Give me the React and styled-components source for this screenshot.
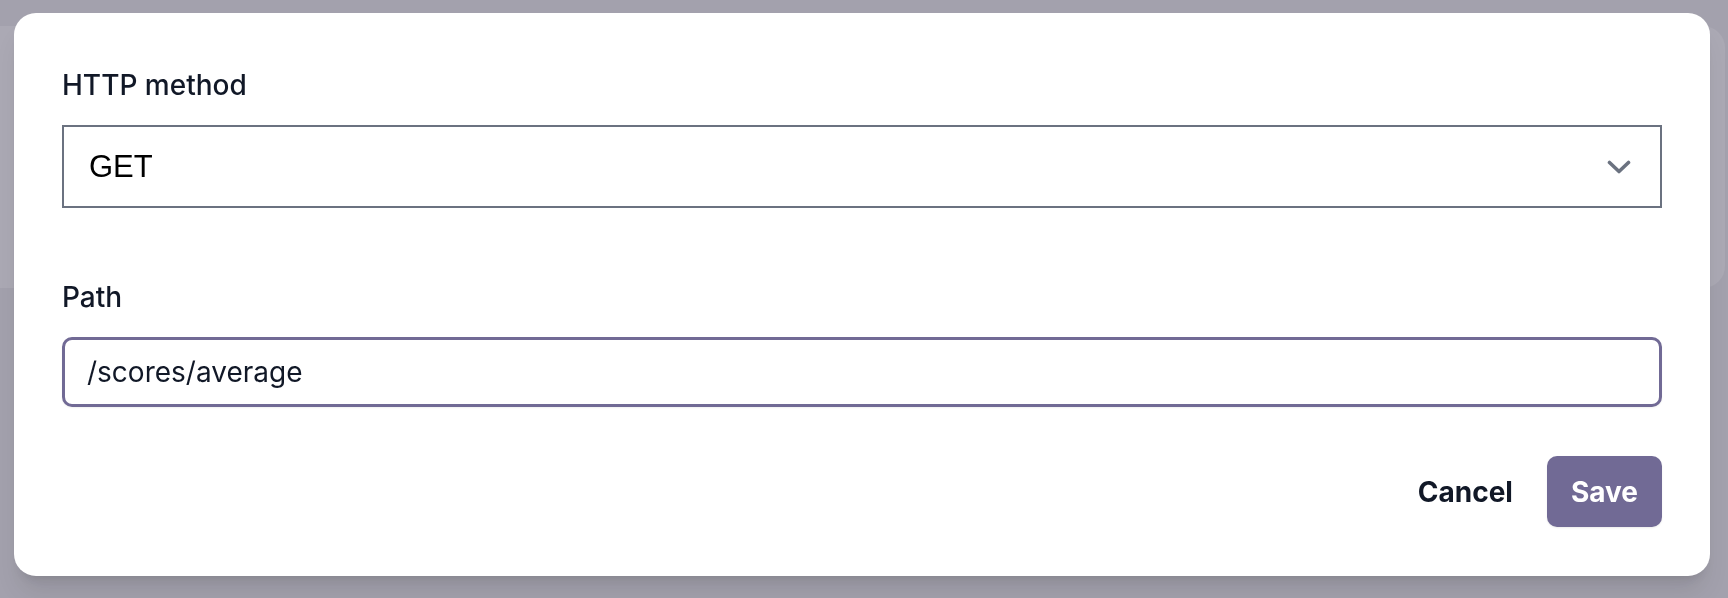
import React from "react";
import styled, { createGlobalStyle } from "styled-components";

const GlobalStyle = createGlobalStyle`
  html, body {
    margin: 0;
    padding: 0;
    width: 100%;
    height: 100%;
    overflow: hidden;
  }
  body {
    background: #e6e6eb;
    font-family: Inter, "Noto Sans", "Liberation Sans", sans-serif;
  }
`;

const Page = styled.div`
  padding: 26px 3px 0 0;
`;

const PageCard = styled.div`
  height: 262px;
  margin-left: -20px;
  background: #f4f4f7;
  border-radius: 22px;
`;

const Overlay = styled.div`
  position: fixed;
  inset: 0;
  background: rgba(82, 78, 98, 0.45);
  display: flex;
  align-items: flex-start;
  padding: 13px 18px 0 14px;
`;

const Dialog = styled.form`
  flex: 1;
  background: #ffffff;
  border-radius: 22px;
  padding: 56px 48px 49px;
  box-shadow: 0 20px 25px -5px rgba(0, 0, 0, 0.1), 0 8px 10px -6px rgba(0, 0, 0, 0.1);
  display: flex;
  flex-direction: column;
`;

const Field = styled.div`
  display: flex;
  flex-direction: column;
  gap: 24px;
  margin-bottom: ${(p) => p.$spacing}px;
`;

const Label = styled.label`
  font-size: 28px;
  line-height: 32px;
  font-weight: 500;
  color: #111827;
`;

const SelectBox = styled.div`
  height: 83px;
  box-sizing: border-box;
  border: 2px solid #6b7280;
  padding: 0 29px 0 25px;
  display: flex;
  align-items: center;
  justify-content: space-between;
  background: #fff;
`;

const SelectValue = styled.span`
  font-family: "Liberation Sans", Arial, sans-serif;
  font-size: 31px;
  color: #000;
`;

const TextInput = styled.input`
  height: 70px;
  box-sizing: border-box;
  border: 3px solid #716a95;
  border-radius: 10px;
  padding: 0 22px;
  font-family: Inter, "Noto Sans", sans-serif;
  font-size: 28px;
  color: #111827;
  outline: none;
  box-shadow: 0 1px 2px rgba(0, 0, 0, 0.06);
`;

const Actions = styled.div`
  display: flex;
  justify-content: flex-end;
  gap: 10px;
`;

const Button = styled.button`
  height: 71px;
  padding: 0 24px;
  border: none;
  border-radius: 10px;
  font-family: Inter, "Noto Sans", sans-serif;
  font-size: 28px;
  font-weight: 700;
  cursor: pointer;
  background: ${(p) => (p.$primary ? "#716a95" : "transparent")};
  color: ${(p) => (p.$primary ? "#ffffff" : "#111827")};
  box-shadow: ${(p) => (p.$primary ? "0 1px 2px rgba(0,0,0,0.08)" : "none")};
`;

const Chevron = () => (
  <svg width="24" height="14" viewBox="0 0 24 14" fill="none">
    <polyline
      points="2.5,2.5 12,11.5 21.5,2.5"
      stroke="#6b7280"
      strokeWidth="3.6"
      strokeLinecap="round"
      strokeLinejoin="round"
    />
  </svg>
);

export default function App() {
  return (
    <>
      <GlobalStyle />
      <Page>
        <PageCard />
      </Page>
      <Overlay>
        <Dialog onSubmit={(e) => e.preventDefault()}>
          <Field $spacing={73}>
            <Label>HTTP method</Label>
            <SelectBox>
              <SelectValue>GET</SelectValue>
              <Chevron />
            </SelectBox>
          </Field>
          <Field $spacing={49}>
            <Label>Path</Label>
            <TextInput defaultValue="/scores/average" />
          </Field>
          <Actions>
            <Button type="button">Cancel</Button>
            <Button type="submit" $primary>
              Save
            </Button>
          </Actions>
        </Dialog>
      </Overlay>
    </>
  );
}
